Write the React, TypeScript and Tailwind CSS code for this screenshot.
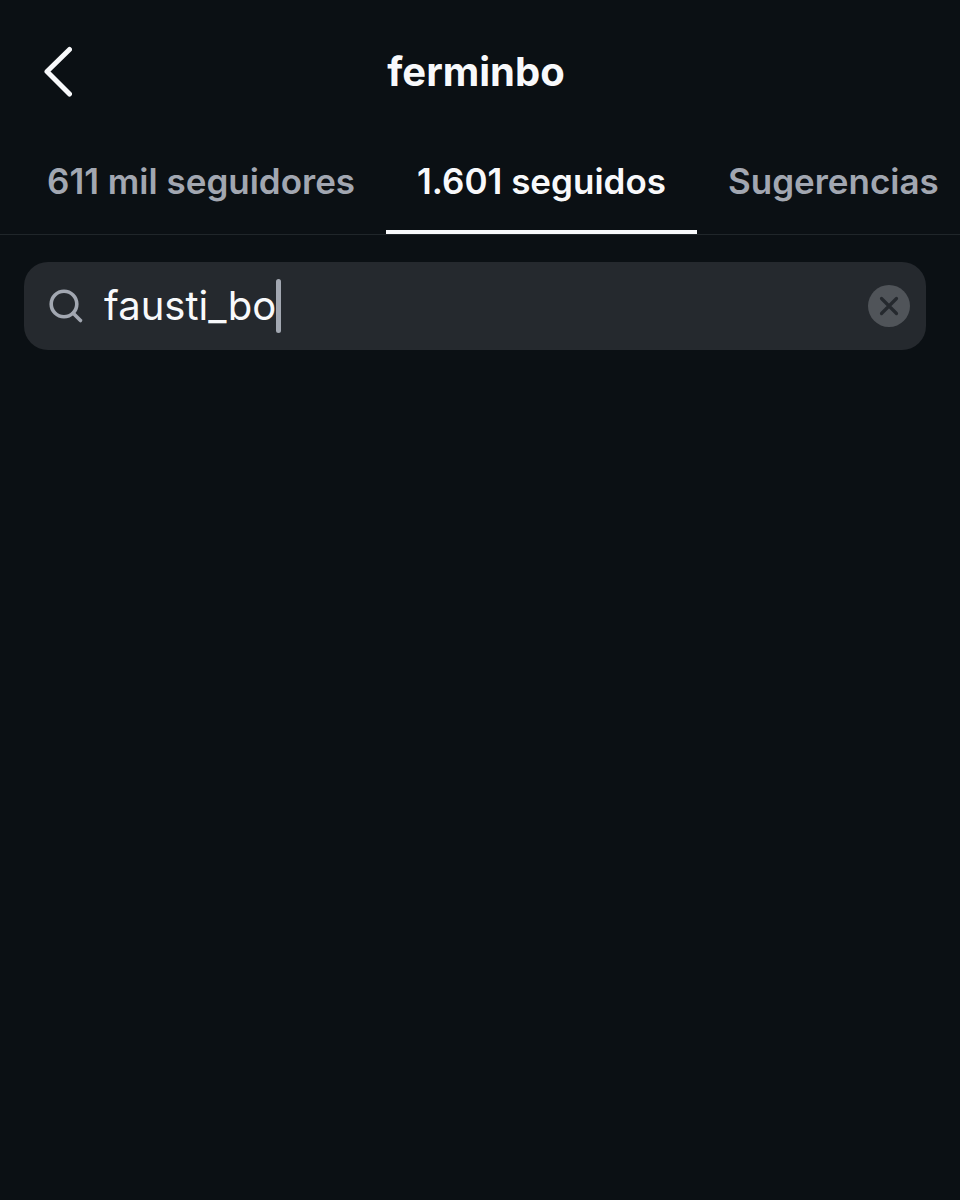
import { useRef, useState } from "react";

const tabs = [
  { id: "followers", label: "611 mil seguidores" },
  { id: "following", label: "1.601 seguidos" },
  { id: "suggested", label: "Sugerencias" },
];

function Header({ username }: { username: string }) {
  return (
    <header className="grid h-36 grid-cols-[1fr_auto_1fr] items-center pr-8 pl-6">
      <button type="button" aria-label="Volver" className="justify-self-start p-4">
        <svg
          className="h-[54px] w-8"
          viewBox="0 0 32 54"
          fill="none"
          stroke="currentColor"
          strokeWidth="5"
          strokeLinecap="round"
          strokeLinejoin="round"
        >
          <path d="M29.5 4.5 7 26.5l22.5 22.5" />
        </svg>
      </button>
      <h1 className="text-[40px] leading-12 font-bold">{username}</h1>
    </header>
  );
}

export default function App() {
  const [active, setActive] = useState("following");
  const [query, setQuery] = useState("fausti_bo");
  const input = useRef<HTMLInputElement>(null);

  return (
    <div className="min-h-screen overflow-x-hidden bg-[#0b1014] font-['Inter','Liberation_Sans',sans-serif] text-[#f8f9fb]">
      <Header username="ferminbo" />

      <nav className="flex h-[91px] border-b border-[#20262a] pl-4">
        {tabs.map((tab) => (
          <button
            key={tab.id}
            type="button"
            aria-current={active === tab.id ? "page" : undefined}
            onClick={() => setActive(tab.id)}
            className={`border-b-4 px-[31px] pb-3 text-[35px] font-semibold whitespace-nowrap ${
              active === tab.id ? "border-[#f8f9fb]" : "border-transparent text-[#a2a7b1]"
            }`}
          >
            {tab.label}
          </button>
        ))}
      </nav>

      <main className="pt-[27px] pr-[34px] pl-6">
        <div
          role="search"
          onClick={() => input.current?.focus()}
          className="flex h-[88px] items-center rounded-3xl bg-[#25292e] pr-4 pl-6"
        >
          <svg
            className="mr-5 size-9 shrink-0 text-[#a2a7b1]"
            viewBox="0 0 36 36"
            fill="none"
            stroke="currentColor"
            strokeWidth="3.6"
            strokeLinecap="round"
            aria-hidden="true"
          >
            <circle cx="16" cy="16" r="12.8" />
            <path d="m25.2 25.2 7.3 7.3" />
          </svg>
          <input
            ref={input}
            type="text"
            aria-label="Buscar"
            spellCheck={false}
            value={query}
            onChange={(e) => setQuery(e.target.value)}
            className="field-sizing-content max-w-full min-w-0 bg-transparent text-[40px] leading-12 caret-transparent outline-none"
          />
          <span className="h-[54px] w-[5px] shrink-0 rounded-full bg-[#a2a7b1]" />
          <button
            type="button"
            aria-label="Borrar"
            onClick={() => setQuery("")}
            className="ml-auto shrink-0 rounded-full bg-[#505459] text-[#25292e]"
          >
            <svg
              className="size-[42px]"
              viewBox="0 0 42 42"
              fill="none"
              stroke="currentColor"
              strokeWidth="3.2"
              strokeLinecap="round"
            >
              <path d="m13.5 13.5 15 15M28.5 13.5l-15 15" />
            </svg>
          </button>
        </div>
      </main>
    </div>
  );
}
